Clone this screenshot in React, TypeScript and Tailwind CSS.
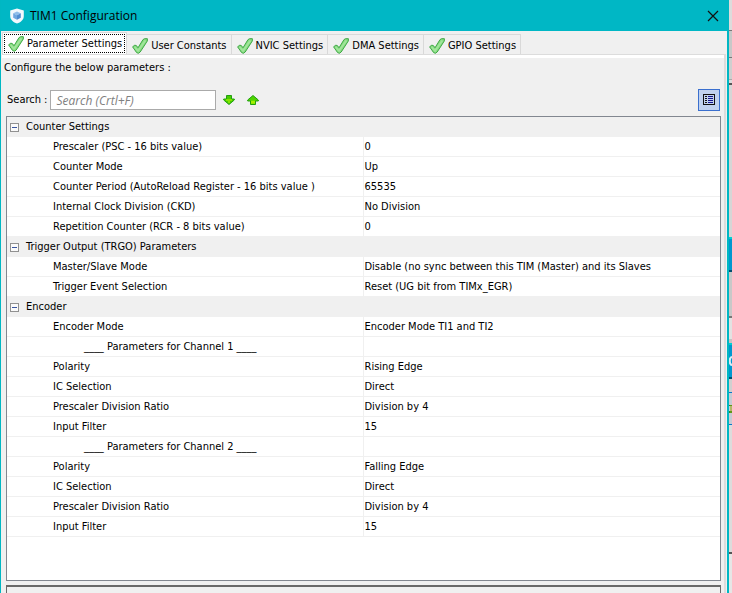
import { Fragment, useState } from "react";

type Row = { name: string; value?: string; heading?: boolean };
type Group = { title: string; rows: Row[] };

const channelRows: Row[] = [
  { name: "IC Selection", value: "Direct" },
  { name: "Prescaler Division Ratio", value: "Division by 4" },
  { name: "Input Filter", value: "15" },
];

const groups: Group[] = [
  {
    title: "Counter Settings",
    rows: [
      { name: "Prescaler (PSC - 16 bits value)", value: "0" },
      { name: "Counter Mode", value: "Up" },
      { name: "Counter Period (AutoReload Register - 16 bits value )", value: "65535" },
      { name: "Internal Clock Division (CKD)", value: "No Division" },
      { name: "Repetition Counter (RCR - 8 bits value)", value: "0" },
    ],
  },
  {
    title: "Trigger Output (TRGO) Parameters",
    rows: [
      { name: "Master/Slave Mode", value: "Disable (no sync between this TIM (Master) and its Slaves" },
      { name: "Trigger Event Selection", value: "Reset (UG bit from TIMx_EGR)" },
    ],
  },
  {
    title: "Encoder",
    rows: [
      { name: "Encoder Mode", value: "Encoder Mode TI1 and TI2" },
      { name: "____ Parameters for Channel 1 ____", heading: true },
      { name: "Polarity", value: "Rising Edge" },
      ...channelRows,
      { name: "____ Parameters for Channel 2 ____", heading: true },
      { name: "Polarity", value: "Falling Edge" },
      ...channelRows,
    ],
  },
];

const tabs = ["Parameter Settings", "User Constants", "NVIC Settings", "DMA Settings", "GPIO Settings"];

function CheckIcon() {
  return (
    <svg viewBox="0 0 16 16" className="size-4 shrink-0" aria-hidden="true">
      <path d="M0.6 8.8 L2.8 7.2 L4.4 7.6 L6 9.8 L11 1.6 L12.6 0.7 L15.4 0.7 L15.3 3 L8.2 14 L6.4 15.3 L4.6 14.6 Z" fill="#86dc80" stroke="#3fa845" strokeWidth="1" strokeLinejoin="round" />
      <path d="M2.6 9 L6 12.8 L13.4 2.4" fill="none" stroke="#a2e59c" strokeWidth="1.8" />
    </svg>
  );
}

function ArrowIcon({ up = false }: { up?: boolean }) {
  return up ? (
    <svg viewBox="0 0 12 10" className="h-[10px] w-3" aria-hidden="true">
      <path d="M3.5 9.5 H8.5 V6 H11.3 V5 L6 0.5 L0.7 5 V6 H3.5 Z" fill="#4fd400" stroke="#22a010" strokeWidth="1" />
      <path d="M4 6.5 H8 M4 8 H8" stroke="#a4f000" strokeWidth="1.4" />
    </svg>
  ) : (
    <svg viewBox="0 0 12 10" className="h-[10px] w-3" aria-hidden="true">
      <path d="M3.5 0.5 H8.5 V4 H11.3 V5 L6 9.5 L0.7 5 V4 H3.5 Z" fill="#48cc00" stroke="#22a010" strokeWidth="1" />
      <path d="M3 5 H9 M5 7 H7" stroke="#96ec00" strokeWidth="1.4" />
    </svg>
  );
}

function LogoIcon() {
  return (
    <svg viewBox="0 0 16 16" className="size-4" aria-hidden="true">
      <path d="M8 0.5 L14.8 2.5 V8 C14.8 12 11.5 14.4 8 15.6 C4.5 14.4 1.2 12 1.2 8 V2.5 Z" fill="#f2f8fd" />
      <path d="M8 3.4 L11.8 5.2 L8 7.2 L4.2 5.2 Z" fill="#8fbdea" />
      <path d="M4.2 5.2 L8 7.2 V11.8 L4.2 9.8 Z" fill="#6fa6e0" />
      <path d="M11.8 5.2 L8 7.2 V11.8 L11.8 9.8 Z" fill="#4f8cd0" />
    </svg>
  );
}

function ListIcon() {
  return (
    <svg viewBox="0 0 12 12" className="size-3" shapeRendering="crispEdges" aria-hidden="true">
      <rect x="0.5" y="0.5" width="11" height="10" fill="#c1d2ee" stroke="#111" />
      <path d="M2 2.5H4M2 4.5H4M2 6.5H4M2 8.5H4" stroke="#111" />
      <path d="M5 2.5H10M5 4.5H10M5 6.5H10M5 8.5H10" stroke="#14148c" />
    </svg>
  );
}

/* Sliver of the main window that shows beside the dialog. */
function BackgroundWindow() {
  return (
    <div className="flex w-[3px] shrink-0 flex-col overflow-hidden bg-[#dcdcdc]" aria-hidden="true">
      <div className="h-[30px]" />
      <div className="h-7 border-y border-[#777] bg-[#c8c8c8]" />
      <div className="h-[22px] border-b border-[#aaa] bg-[#cfcfcf]" />
      <div className="h-[5px] border-b-2 border-[#555]" />
      <div className="h-[152px] bg-[#d6d6d6]" />
      <div className="h-[35px] border-t-2 border-b-2 border-t-[#00cfd0] border-b-[#005070] bg-[#0098cf]" />
      <div className="h-[46px] border-b-2 border-[#777] bg-[#c8c8c8]" />
      <div className="h-[25px] border-b-4 border-[#c4c4c4] bg-[#e2e2e2]" />
      <div className="flex h-9 items-center border-t-2 border-b-2 border-t-[#00cfd0] border-b-[#005070] bg-[#0098cf]">
        <svg viewBox="0 0 3 10" className="h-[10px] w-[3px]">
          <path d="M3 1 C0 1 0 9 3 9" fill="none" stroke="#d8eef6" strokeWidth="2" />
        </svg>
      </div>
      <div className="h-[13px] bg-[#d0d0d0]" />
      <div className="flex h-[33px] items-center border-y border-[#0878c8] bg-[#c6ccd4]">
        <svg viewBox="0 0 3 8" className="h-2 w-[3px]">
          <path d="M0 0H3M0 7H3" stroke="#209030" strokeWidth="2" />
          <path d="M2 0V8" stroke="#a0a000" strokeWidth="1" />
        </svg>
      </div>
      <div className="grow" />
      <div className="h-[2px] bg-[#555]" />
      <div className="h-[39px] bg-[#e6e6e6]" />
    </div>
  );
}

export default function App() {
  const [active, setActive] = useState(0);
  const [closed, setClosed] = useState<number[]>([]);
  const toggle = (i: number) =>
    setClosed((c) => (c.includes(i) ? c.filter((n) => n !== i) : [...c, i]));

  return (
    <div className="flex h-screen overflow-hidden font-['DejaVu_Sans_Condensed','DejaVu_Sans',sans-serif] text-[11px] leading-4 text-black">
      <div className="flex min-w-0 grow flex-col border-r-2 border-l border-[#00b7c3] bg-[#f0f0f0]">
        <header className="flex h-[31px] shrink-0 items-center gap-1 bg-[#00b7c5] pr-2 pl-2">
          <LogoIcon />
          <h1 className="grow pl-px font-['Open_Sans',sans-serif] text-xs">TIM1 Configuration</h1>
          <button type="button" aria-label="Close">
            <svg viewBox="0 0 12 12" className="size-3" aria-hidden="true">
              <path d="M1 1 L11 11 M11 1 L1 11" stroke="#111" strokeWidth="1.2" />
            </svg>
          </button>
        </header>

        <div className="flex grow flex-col pt-px pr-px pl-px">
          <div role="tablist" className="flex h-[22px] shrink-0 items-end">
            {tabs.map((tab, i) => (
              <button
                key={tab}
                type="button"
                role="tab"
                aria-selected={i === active}
                onClick={() => setActive(i)}
                className={
                  i === active
                    ? "h-[22px] border border-b-0 border-[#d9d9d9] bg-white p-px whitespace-nowrap outline-none"
                    : "flex h-5 items-center gap-[3px] border-t border-r border-[#d9d9d9] pt-[2px] pr-1 pl-[5px] whitespace-nowrap"
                }
              >
                {i === active ? (
                  <span className="flex h-[19px] items-center gap-[3px] border border-dotted border-black pr-[2px] pl-[3px]">
                    <CheckIcon />
                    {tab}
                  </span>
                ) : (
                  <>
                    <CheckIcon />
                    {tab}
                  </>
                )}
              </button>
            ))}
          </div>

          <main className="flex grow flex-col border-t border-r-2 border-[#dcdcdc]">
            <div className="h-[3px] bg-white" />
            <p className="pt-[2px] pl-[2px]">Configure the below parameters :</p>
            <div className="flex h-10 items-end justify-between pr-1 pb-[5px] pl-[5px]">
              <div className="flex h-[22px] items-center">
                <label htmlFor="search">Search :</label>
                <input
                  id="search"
                  type="text"
                  placeholder="Search (Crtl+F)"
                  className="ml-[3px] h-5 w-[166px] border border-[#aaa] bg-white px-[5px] font-['Open_Sans',sans-serif] text-xs italic outline-none placeholder:text-[#808080]"
                />
                <button type="button" aria-label="Find next" className="ml-[7px]">
                  <ArrowIcon />
                </button>
                <button type="button" aria-label="Find previous" className="ml-3">
                  <ArrowIcon up />
                </button>
              </div>
              <button type="button" aria-label="Show description" className="flex size-[22px] items-center justify-center border border-[#3a6fce] bg-[#c1d2ee]">
                <ListIcon />
              </button>
            </div>

            <div className="mr-[3px] ml-1 grow border border-[#828790] bg-white">
              <table className="w-full table-fixed border-separate border-spacing-0">
                <colgroup>
                  <col className="w-1/2" />
                  <col className="w-1/2" />
                </colgroup>
                <tbody>
                  {groups.map((group, g) => (
                    <Fragment key={group.title}>
                      <tr className="h-5 bg-[#f0f0f0]">
                        <th colSpan={2} className="p-0 text-left font-normal">
                          <div className="flex h-5 items-center gap-[7px] pl-[3px]">
                            <button
                              type="button"
                              aria-label={`Toggle ${group.title}`}
                              aria-expanded={!closed.includes(g)}
                              onClick={() => toggle(g)}
                              className="flex size-[9px] items-center justify-center border border-[#919191] bg-[#fafafa]"
                            >
                              <span className="h-px w-[5px] bg-[#3a55a0]" />
                            </button>
                            {group.title}
                          </div>
                        </th>
                      </tr>
                      {!closed.includes(g) &&
                        group.rows.map((row, r) => (
                          <tr key={r} className="h-5">
                            <td className={row.heading ? "border-r border-b border-[#f0f0f0] p-0 pl-[77px] whitespace-nowrap" : "border-r border-b border-[#f0f0f0] p-0 pl-[46px] whitespace-nowrap"}>
                              {row.name}
                            </td>
                            <td className="border-b border-[#f0f0f0] p-0 pl-px whitespace-nowrap">{row.value}</td>
                          </tr>
                        ))}
                    </Fragment>
                  ))}
                </tbody>
              </table>
            </div>
            <div className="mt-1 mr-[3px] ml-1 h-2 border-x border-t-2 border-[#696969]" />
          </main>
        </div>
      </div>
      <BackgroundWindow />
    </div>
  );
}
